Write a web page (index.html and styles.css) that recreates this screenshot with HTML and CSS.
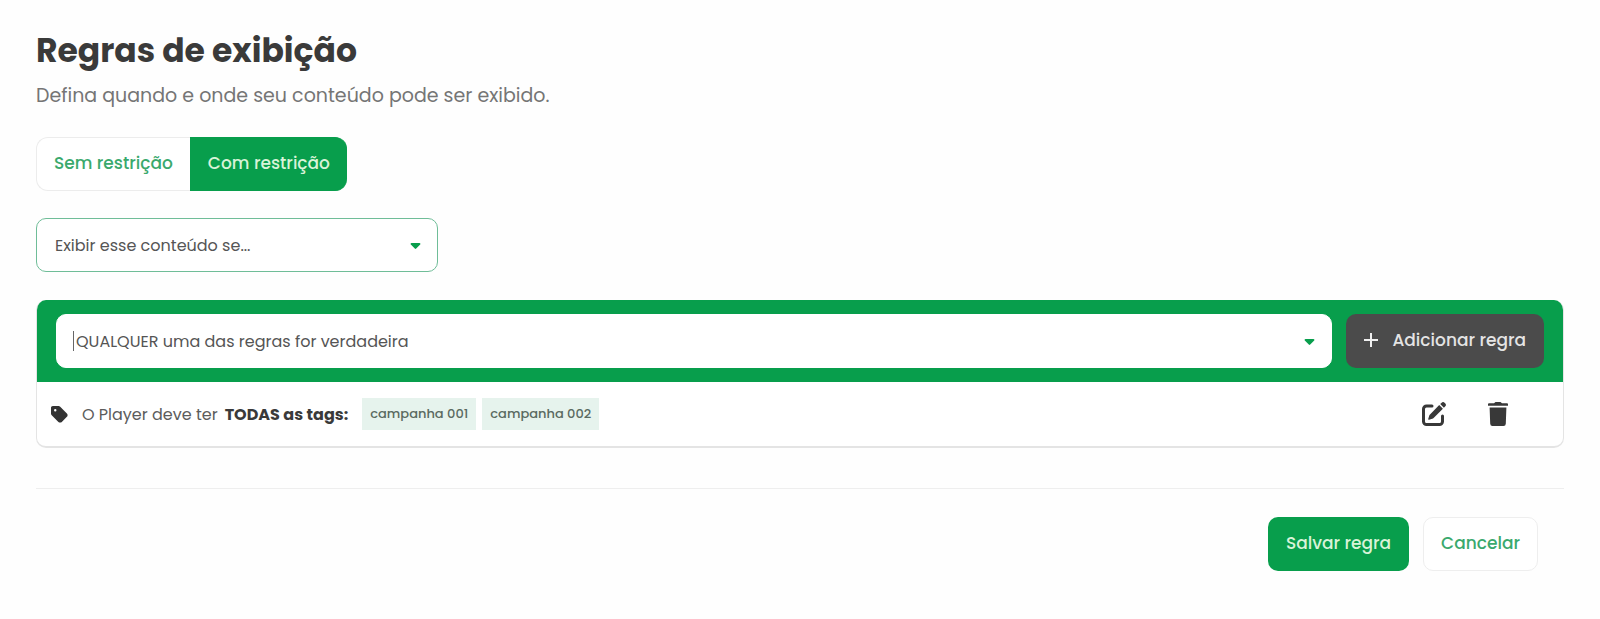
FILE: index.html
```html
<!DOCTYPE html>
<html lang="pt-BR">
<head>
    <meta charset="UTF-8">
    <meta name="viewport" content="width=device-width, initial-scale=1.0">
    <title>Regras de exibição</title>
    <link rel="stylesheet" href="styles.css">
</head>
<body>
    <h1>Regras de exibição</h1>
    <p class="subtitle">Defina quando e onde seu conteúdo pode ser exibido.</p>

    <!-- Restriction toggle -->
    <div class="toggle">
        <button type="button" class="toggle-btn">Sem restrição</button>
        <button type="button" class="toggle-btn active">Com restrição</button>
    </div>

    <!-- Condition -->
    <div class="select-box condition">
        <select aria-label="Condição de exibição">
            <option>Exibir esse conteúdo se...</option>
        </select>
        <svg class="arrow" viewBox="0 0 10 6"><path d="M1 0h8a1 1 0 0 1 .7 1.6L5.7 5.6a1 1 0 0 1-1.4 0L.3 1.6A1 1 0 0 1 1 0z"/></svg>
    </div>

    <!-- Rules -->
    <div class="rules">
        <div class="rules-header">
            <div class="select-box match">
                <select aria-label="Combinação das regras">
                    <option>QUALQUER uma das regras for verdadeira</option>
                </select>
                <span class="cursor"></span>
                <svg class="arrow" viewBox="0 0 10 6"><path d="M1 0h8a1 1 0 0 1 .7 1.6L5.7 5.6a1 1 0 0 1-1.4 0L.3 1.6A1 1 0 0 1 1 0z"/></svg>
            </div>
            <button type="button" class="btn btn-dark">
                <svg class="plus" viewBox="0 0 14 14"><path d="M7 0v14M0 7h14"/></svg>
                Adicionar regra
            </button>
        </div>
        <div class="rule">
            <svg class="tag-icon" viewBox="0 0 448 448"><path d="M0 48v149.500c0 17 6.700 33.300 18.700 45.300l176 176c25 25 65.500 25 90.500 0l133.500-133.500c25-25 25-65.500 0-90.500l-176-176C230.700 6.700 214.500 0 197.500 0H48C21.500 0 0 21.500 0 48zm112 32a32 32 0 1 1 0 64 32 32 0 1 1 0-64z"/></svg>
            <span class="rule-text">O Player deve ter</span>
            <strong>TODAS as tags:</strong>
            <span class="tags">
                <span class="tag">campanha 001</span>
                <span class="tag">campanha 002</span>
            </span>
            <div class="actions">
                <button type="button" class="icon-btn" aria-label="Editar">
                    <svg viewBox="0 0 24 24">
                        <path class="line" d="M10 4H4.500A3 3 0 0 0 1.500 7V19.500A3 3 0 0 0 4.500 22.500h13A3 3 0 0 0 20.500 19.500v-5.500"/>
                        <path d="M17.200 3.100 20.900 6.800 11.600 16a3 3 0 0 1-1.300.8L7 17.800a.7.700 0 0 1-.8-.8l1-3.300a3 3 0 0 1 .8-1.300z"/>
                        <path d="M18.200 2.100l1.200-1.200a2.400 2.400 0 0 1 3.400 0l.3.300a2.400 2.400 0 0 1 0 3.400l-1.200 1.200z"/>
                    </svg>
                </button>
                <button type="button" class="icon-btn" aria-label="Excluir">
                    <svg viewBox="0 0 24 24">
                        <path d="M9.500 0h5l1.500 1.300H21a1 1 0 0 1 1 1v1.400H2V2.300a1 1 0 0 1 1-1h5z"/>
                        <path d="M3.600 5.500h16.800l-.6 16.300a2.300 2.300 0 0 1-2.300 2.200h-11a2.300 2.300 0 0 1-2.300-2.200z"/>
                    </svg>
                </button>
            </div>
        </div>
    </div>

    <div class="footer">
        <button type="submit" class="btn btn-save">Salvar regra</button>
        <button type="button" class="btn btn-cancel">Cancelar</button>
    </div>
</body>
</html>
```
FILE: styles.css
```css
* { box-sizing: border-box; }
body { font-family: Poppins, Inter, sans-serif; margin: 0; padding: 26px 36px; background: #fefefe; color: #3a3a3a; }
button, select { font-family: inherit; cursor: pointer; }
h1 { margin: 0; font-size: 33px; line-height: 50px; font-weight: 700; }
.subtitle { margin: 6px 0 27px; font-size: 19px; line-height: 28px; color: #757575; }

.toggle { display: flex; }
.toggle-btn { height: 54px; padding: 0 17px 2px; border: 1px solid #ececec; border-right: 0; border-radius: 12px 0 0 12px; background: #fff; color: #3aa96d; font-size: 17px; font-weight: 500; }
.toggle-btn.active { border-color: #089e4c; border-radius: 0 12px 12px 0; background: #089e4c; color: #d8f3d8; }

.select-box { position: relative; }
.select-box select { display: block; width: 100%; height: 54px; padding: 0 18px; border: 1px solid #6fbd98; border-radius: 10px; background: #fff; color: #555; font-size: 16px; appearance: none; }
.arrow { position: absolute; right: 17px; top: 25px; width: 11px; height: 6px; fill: #089e4c; pointer-events: none; }
.condition { width: 402px; margin: 27px 0 28px; }

.rules { border-radius: 10px; border: 1px solid #e4e4e4; border-top: 0; border-bottom-width: 2px; overflow: hidden; background: #fff; }
.rules-header { display: flex; gap: 14px; padding: 14px 20px; margin: 0 -1px; background: #089e4c; }
.match { flex: 1; }
.match select { border-color: #fff; padding: 0 19px; }
.cursor { position: absolute; left: 17px; top: 17px; width: 1px; height: 20px; background: #666; }

.btn { height: 54px; padding: 0 17px 2px; border: 1px solid transparent; border-radius: 10px; font-size: 17px; font-weight: 500; white-space: nowrap; }
.btn-dark { display: flex; align-items: center; gap: 14px; background: #4b4b4b; color: #e4e4e4; }
.plus { width: 14px; height: 14px; fill: none; stroke: #f0f0f0; stroke-width: 2; }
.btn-save { background: #089e4c; color: #d8f3d8; }
.btn-cancel { background: #fff; border-color: #eee; color: #3aa96d; }

.rule { display: flex; align-items: center; height: 64px; padding: 0 53px 0 14px; font-size: 16px; }
.tag-icon { width: 17px; height: 17px; margin-right: 14px; fill: #333; }
.rule-text { margin-right: 7px; color: #5c5c5c; }
.tags { display: flex; gap: 6px; margin-left: 14px; }
.tag { height: 32px; padding: 0 8px; background: #e6f3ed; color: #5a6a61; font-size: 13px; font-weight: 500; line-height: 32px; }
.actions { display: flex; gap: 40px; margin-left: auto; }
.icon-btn { width: 24px; height: 24px; padding: 0; border: 0; background: none; }
.icon-btn svg { display: block; width: 24px; height: 24px; fill: #383838; }
.icon-btn .line { fill: none; stroke: #383838; stroke-width: 3; stroke-linecap: round; }

.footer { display: flex; justify-content: flex-end; gap: 14px; margin-top: 40px; padding: 28px 26px 0 0; border-top: 1px solid #eee; }
```
